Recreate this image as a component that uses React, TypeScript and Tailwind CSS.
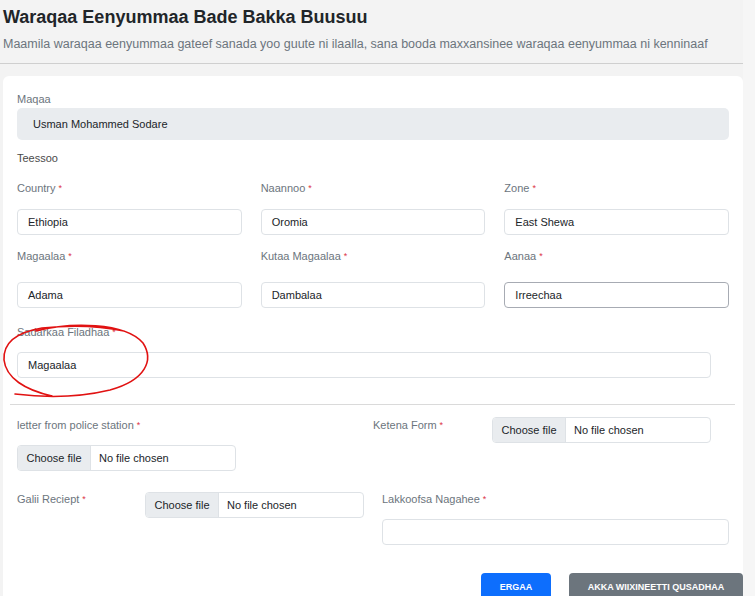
import React from "react";

const Req = () => <span className="text-[#dc3545] text-[9px] ml-[3px] align-top">*</span>;

function Label({ text, req = true }: { text: string; req?: boolean }) {
  return (
    <div className="text-[11px] leading-[14px] text-[#6c757d]">
      {text}
      {req && <Req />}
    </div>
  );
}

function TextBox({ value, focus = false }: { value?: string; focus?: boolean }) {
  return (
    <div
      className={`h-[26px] rounded-[4px] bg-white flex items-center pl-[10px] text-[11px] text-[#212529] border ${
        focus ? "border-[#a7abb3]" : "border-[#dee2e6]"
      }`}
    >
      {value}
    </div>
  );
}

function FileBox() {
  return (
    <div className="h-[26px] w-[219px] border border-[#dee2e6] rounded-[4px] flex overflow-hidden text-[11px] text-[#212529] bg-white">
      <span className="bg-[#e9ecef] border-r border-[#dee2e6] w-[73px] flex items-center justify-center">Choose file</span>
      <span className="pl-[8px] flex items-center">No file chosen</span>
    </div>
  );
}

const rows = [
  [
    { label: "Country", value: "Ethiopia" },
    { label: "Naannoo", value: "Oromia" },
    { label: "Zone", value: "East Shewa" },
  ],
  [
    { label: "Magaalaa", value: "Adama" },
    { label: "Kutaa Magaalaa", value: "Dambalaa" },
    { label: "Aanaa", value: "Irreechaa", focus: true },
  ],
];

export default function App() {
  return (
    <div className="relative h-[596px] overflow-hidden flex bg-[#f3f3f3] font-['Liberation_Sans',Arial,sans-serif]">
      <div className="w-[743px] shrink-0">
        {/* header */}
        <div className="pl-[3px] pt-[5px]">
          <h1 className="text-[18px] leading-[24px] font-bold text-[#212529]">Waraqaa Eenyummaa Bade Bakka Buusuu</h1>
          <p className="mt-[7px] text-[12.5px] leading-[16px] text-[#6c757d]">
            Maamila waraqaa eenyummaa gateef sanada yoo guute ni ilaalla, sana booda maxxansinee waraqaa eenyummaa ni kenninaaf
          </p>
        </div>
        <div className="mt-[11px] border-t border-[#cfcfcf]" />

        {/* card */}
        <div className="ml-[3px] mt-[12px] bg-white rounded-[6px] px-[14px] pt-[16px] h-[600px]">
          <Label text="Maqaa" req={false} />
          <div className="mt-[2px] h-[32px] rounded-[5px] bg-[#e9ecef] flex items-center pl-[16px] text-[11px] text-[#212529]">
            Usman Mohammed Sodare
          </div>
          <div className="mt-[11px] text-[11px] leading-[14px] text-[#4a4a4a]">Teessoo</div>

          <div className="mt-[16px] grid grid-cols-3 gap-x-[19px]">
            {rows[0].map((f) => (
              <div key={f.label}>
                <Label text={f.label} />
                <div className="mt-[14px]">
                  <TextBox value={f.value} />
                </div>
              </div>
            ))}
          </div>
          <div className="mt-[14px] grid grid-cols-3 gap-x-[19px]">
            {rows[1].map((f) => (
              <div key={f.label}>
                <Label text={f.label} />
                <div className="mt-[19px]">
                  <TextBox value={f.value} focus={f.focus} />
                </div>
              </div>
            ))}
          </div>

          <div className="mt-[17px]">
            <Label text="Sadarkaa Filadhaa" />
            <div className="mt-[13px] w-[694px]">
              <TextBox value="Magaalaa" />
            </div>
          </div>

          <div className="mt-[26px] -ml-[7px] -mr-[6px] border-t border-[#dadada]" />

          {/* uploads */}
          <div className="flex">
            <div className="w-[356px] pt-[13px]">
              <Label text="letter from police station" />
              <div className="mt-[13px]">
                <FileBox />
              </div>
            </div>
            <div className="flex items-start pt-[12px]">
              <div className="w-[119px] pt-[1px]">
                <Label text="Ketena Form" />
              </div>
              <FileBox />
            </div>
          </div>

          <div className="flex mt-[21px]">
            <div className="w-[365px] flex items-start">
              <div className="w-[128px]">
                <Label text="Galii Reciept" />
              </div>
              <FileBox />
            </div>
            <div className="flex-1">
              <Label text="Lakkoofsa Nagahee" />
              <div className="mt-[13px]">
                <TextBox />
              </div>
            </div>
          </div>

          <div className="mt-[28px] -mr-[14px] flex justify-end gap-[18px]">
            <button className="w-[70px] h-[30px] rounded-[4px] bg-[#0d6efd] text-white text-[9px] font-bold">ERGAA</button>
            <button className="w-[174px] h-[30px] rounded-[4px] bg-[#6c757d] text-white text-[9px] font-bold">
              AKKA WIIXINEETTI QUSADHAA
            </button>
          </div>
        </div>
      </div>
      <div className="flex-1 bg-[#f6f6f6]" />

      {/* red hand-drawn annotation */}
      <svg className="absolute left-0 top-0 pointer-events-none" width="200" height="420" viewBox="0 0 200 420">
        <path
          d="M 36 331 C 70 322, 125 322, 143 343 C 154 360, 146 380, 110 390 C 85 396, 55 399, 15 394 M 52 396 C 25 390, 6 378, 4 360 C 3 342, 18 332, 42 328 C 70 325, 100 326, 124 331"
          fill="none"
          stroke="#e11212"
          strokeWidth="1.6"
          strokeLinecap="round"
        />
      </svg>
    </div>
  );
}
